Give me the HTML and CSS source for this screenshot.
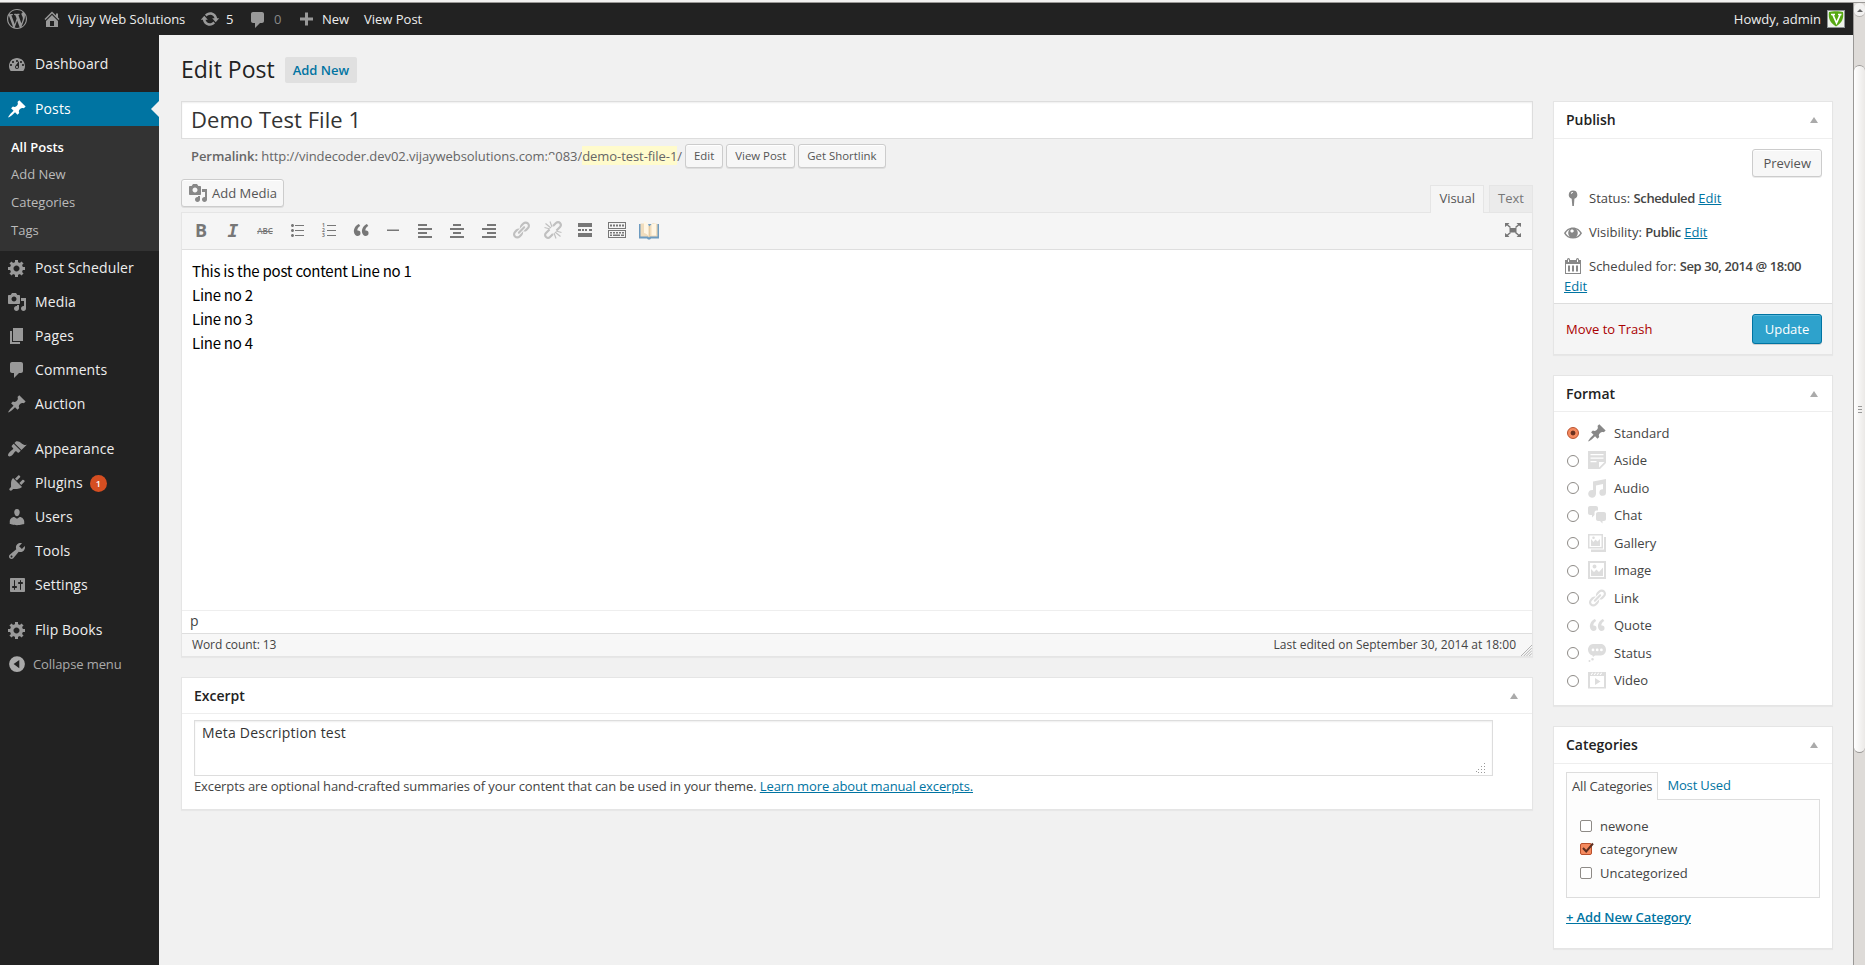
FILE: index.html
```html
<!DOCTYPE html>
<html lang="en">
<head>
    <meta charset="UTF-8">
    <meta name="viewport" content="width=device-width, initial-scale=1.0">
    <title>Edit Post</title>
    <link rel="stylesheet" href="styles.css">
</head>
<body>
    <!-- Icon set -->
    <svg class="sprite">
        <symbol id="wp" viewBox="0 0 20 20"><path d="M20 10c0-5.51-4.49-10-10-10C4.48 0 0 4.49 0 10c0 5.52 4.48 10 10 10 5.51 0 10-4.48 10-10zM7.78 15.37L4.37 6.22c.55-.02 1.17-.08 1.17-.08.5-.06.44-1.13-.06-1.11 0 0-1.45.11-2.37.11-.18 0-.37 0-.58-.01C4.12 2.69 6.87 1.11 10 1.11c2.33 0 4.45.87 6.05 2.34-.68-.11-1.65.39-1.65 1.58 0 .74.45 1.36.9 2.1.35.61.55 1.36.55 2.46 0 1.49-1.4 5-1.4 5l-3.03-8.37c.54-.02.82-.17.82-.17.5-.05.44-1.25-.06-1.22 0 0-1.44.12-2.38.12-.87 0-2.33-.12-2.33-.12-.5-.03-.56 1.2-.06 1.22l.92.08 1.26 3.41zM17.41 10c.24-.64.74-1.87.43-4.25.7 1.29 1.05 2.71 1.05 4.25 0 3.29-1.73 6.24-4.4 7.78.97-2.59 1.94-5.2 2.92-7.78zM6.1 18.09C3.12 16.65 1.11 13.53 1.11 10c0-1.3.23-2.48.72-3.59C3.25 10.3 4.67 14.2 6.1 18.09zm4.03-6.63l2.58 6.98c-.86.29-1.76.45-2.71.45-.79 0-1.57-.11-2.29-.33.81-2.38 1.62-4.74 2.42-7.1z"/></symbol>
        <symbol id="home" viewBox="0 0 20 20"><path d="M16 8.5l1.53 1.53-1.06 1.06L10 4.6l-6.47 6.49-1.06-1.06L10 2.5l4 4v-2h2v4zm-6-2.46l6 5.99V18H4v-5.97zM12 17v-5H8v5h4z"/></symbol>
        <symbol id="update" viewBox="0 0 20 20"><path d="M10.2 3.28c3.53 0 6.43 2.61 6.92 6h2.08l-3.5 4-3.5-4h2.32c-.45-1.97-2.21-3.45-4.32-3.45-1.45 0-2.73.71-3.54 1.78L4.95 5.66C6.23 4.2 8.11 3.28 10.2 3.28zm-.4 13.44c-3.52 0-6.43-2.61-6.92-6H.8l3.5-4c1.17 1.33 2.33 2.67 3.5 4H5.48c.45 1.97 2.21 3.45 4.32 3.45 1.45 0 2.73-.71 3.54-1.78l1.71 1.95c-1.28 1.46-3.15 2.38-5.25 2.38z"/></symbol>
        <symbol id="plus" viewBox="0 0 20 20"><path d="M17 8.5v3h-5v5H9v-5H4v-3h5v-5h3v5h5z"/></symbol>
        <symbol id="comments" viewBox="0 0 20 20"><path d="M5 2h9c1.1 0 2 .9 2 2v7c0 1.1-.9 2-2 2h-2l-5 5v-5H5c-1.1 0-2-.9-2-2V4c0-1.1.9-2 2-2z"/></symbol>
        <symbol id="dashboard" viewBox="0 0 20 20"><path fill-rule="evenodd" d="M3.76 17h12.48c1.1-1.37 1.76-3.11 1.76-5 0-4.42-3.58-8-8-8s-8 3.58-8 8c0 1.89.66 3.63 1.76 5zM10 6c.55 0 1 .45 1 1s-.45 1-1 1-1-.45-1-1 .45-1 1-1zM6 7c.55 0 1 .45 1 1s-.45 1-1 1-1-.45-1-1 .45-1 1-1zm8 0c.55 0 1 .45 1 1s-.45 1-1 1-1-.45-1-1 .45-1 1-1zm-5.37 4.55L12 7v6c0 1.1-.9 2-2 2s-2-.9-2-2c0-.57.24-1.08.63-1.45zM4 10c.55 0 1 .45 1 1s-.45 1-1 1-1-.45-1-1 .45-1 1-1zm12 0c.55 0 1 .45 1 1s-.45 1-1 1-1-.45-1-1 .45-1 1-1zm-5 3c0-.55-.45-1-1-1s-1 .45-1 1 .45 1 1 1 1-.45 1-1z"/></symbol>
        <symbol id="pin" viewBox="0 0 20 20"><path d="M10.44 3.02l1.82-1.82 6.36 6.35-1.83 1.82c-1.05-.68-2.48-.57-3.41.36l-.75.75c-.92.93-1.04 2.35-.35 3.41l-1.83 1.82-2.41-2.41-2.8 2.79c-.42.42-3.38 2.71-3.8 2.29s1.86-3.39 2.28-3.81l2.79-2.79L4.1 9.36l1.83-1.82c1.05.69 2.48.57 3.4-.36l.75-.75c.93-.92 1.05-2.35.36-3.41z"/></symbol>
        <symbol id="gear" viewBox="0 0 20 20"><path d="M18 12h-2.18c-.17.7-.44 1.35-.81 1.93l1.54 1.54-2.1 2.1-1.54-1.54c-.58.36-1.23.63-1.91.79V19H8v-2.18c-.68-.16-1.33-.43-1.91-.79l-1.54 1.54-2.12-2.12 1.54-1.54c-.36-.58-.63-1.23-.79-1.91H1V9.03h2.17c.16-.7.44-1.35.8-1.94L2.43 5.55l2.1-2.1 1.54 1.54c.58-.37 1.24-.64 1.93-.81V2h3v2.18c.68.16 1.33.43 1.91.79l1.54-1.54 2.12 2.12-1.54 1.54c.36.59.64 1.24.8 1.94H18V12zm-8.5 1.5c1.66 0 3-1.34 3-3s-1.34-3-3-3-3 1.34-3 3 1.34 3 3 3z"/></symbol>
        <symbol id="media" viewBox="0 0 20 20"><path d="M13 11V4c0-.55-.45-1-1-1h-1.67L9 1H5L3.67 3H2c-.55 0-1 .45-1 1v7c0 .55.45 1 1 1h10c.55 0 1-.45 1-1zM7 4.5c1.38 0 2.5 1.12 2.5 2.5S8.38 9.5 7 9.5 4.5 8.38 4.5 7 5.62 4.5 7 4.5zM14 6h5v10.5c0 1.38-1.12 2.5-2.5 2.5S14 17.88 14 16.5s1.12-2.5 2.5-2.5c.17 0 .34.02.5.05V9h-3V6zm-4 8.05V13h2v3.5c0 1.38-1.12 2.5-2.5 2.5S7 17.88 7 16.5 8.12 14 9.5 14c.17 0 .34.02.5.05z"/></symbol>
        <symbol id="pages" viewBox="0 0 20 20"><path d="M6 15V2h10v13H6zm-1 1h8v2H3V5h2v11z"/></symbol>
        <symbol id="appearance" viewBox="0 0 20 20"><path d="M14.48 11.06L7.41 3.99l1.5-1.5c.5-.56 2.3-.47 3.51.32 1.21.8 1.43 1.28 2.91 2.1 1.18.64 2.45 1.26 4.45.85zm-.71.71L6.7 4.7 4.93 6.47c-.39.39-.39 1.02 0 1.41l1.06 1.06c.39.39.39 1.03 0 1.42-.6.6-1.43 1.11-2.21 1.69-.35.26-.7.53-1.01.84C1.43 14.23.4 16.08 1.4 17.07c.99 1 2.84-.03 4.18-1.36.31-.31.58-.66.85-1.02.57-.78 1.08-1.61 1.69-2.21.39-.39 1.02-.39 1.41 0l1.06 1.06c.39.39 1.02.39 1.41 0z"/></symbol>
        <symbol id="plugins" viewBox="0 0 20 20"><path d="M13.11 4.36L9.87 7.6 8 5.73l3.24-3.24c.35-.34 1.05-.2 1.56.32.52.51.66 1.21.31 1.55zm-8 1.77l.91-1.12 9.01 9.01-1.19.84c-.71.71-2.63 1.16-3.82 1.16H6.14L4.9 17.26c-.59.59-1.54.59-2.12 0-.59-.58-.59-1.53 0-2.12l1.24-1.24v-3.88c0-1.13.4-3.19 1.09-3.89zm7.26 3.97l3.24-3.24c.34-.35 1.04-.21 1.55.31.52.51.66 1.21.31 1.55l-3.24 3.25z"/></symbol>
        <symbol id="users" viewBox="0 0 20 20"><path d="M10 9.25c-2.27 0-2.73-3.44-2.73-3.44C7 4.02 7.82 2 9.97 2c2.16 0 2.98 2.02 2.71 3.81 0 0-.41 3.44-2.68 3.44zm0 2.57L12.72 10c2.39 0 4.52 2.33 4.52 4.53v2.49s-3.65 1.13-7.24 1.13c-3.65 0-7.24-1.13-7.24-1.13v-2.49c0-2.25 1.94-4.48 4.47-4.48z"/></symbol>
        <symbol id="tools" viewBox="0 0 20 20"><path d="M16.68 9.77c-1.34 1.34-3.3 1.67-4.95.99l-5.41 6.52c-.99.99-2.59.99-3.58 0s-.99-2.59 0-3.57l6.52-5.42c-.68-1.65-.35-3.61.99-4.95 1.28-1.28 3.12-1.62 4.72-1.06l-2.89 2.89 2.82 2.82 2.86-2.87c.53 1.58.18 3.39-1.08 4.65zM3.81 16.21c.4.39 1.04.39 1.43 0 .4-.4.4-1.04 0-1.43-.39-.4-1.03-.4-1.43 0-.39.39-.39 1.03 0 1.43z"/></symbol>
        <symbol id="settings" viewBox="0 0 20 20"><path d="M18 16V4c0-.55-.45-1-1-1H4c-.55 0-1 .45-1 1v12c0 .55.45 1 1 1h13c.55 0 1-.45 1-1zM8 11h1c.55 0 1 .45 1 1s-.45 1-1 1H8v1.5c0 .28-.22.5-.5.5s-.5-.22-.5-.5V13H6c-.55 0-1-.45-1-1s.45-1 1-1h1V5.5c0-.28.22-.5.5-.5s.5.22.5.5V11zm5-2h-1c-.55 0-1-.45-1-1s.45-1 1-1h1V5.5c0-.28.22-.5.5-.5s.5.22.5.5V7h1c.55 0 1 .45 1 1s-.45 1-1 1h-1v5.5c0 .28-.22.5-.5.5s-.5-.22-.5-.5V9z"/></symbol>
        <symbol id="collapse" viewBox="0 0 20 20"><path fill-rule="evenodd" d="M10 2.2a7.9 7.9 0 1 0 0 15.8 7.9 7.9 0 0 0 0-15.8zM12.3 6v8.2L6.6 10.1z"/></symbol>
        <symbol id="ul" viewBox="0 0 20 20"><path d="M5.5 7C4.67 7 4 6.33 4 5.5 4 4.68 4.67 4 5.5 4 6.32 4 7 4.68 7 5.5 7 6.33 6.32 7 5.5 7zM8 5h9v1H8V5zm-2.5 7c-.83 0-1.5-.67-1.5-1.5C4 9.68 4.67 9 5.5 9c.82 0 1.5.68 1.5 1.5 0 .83-.68 1.5-1.5 1.5zM8 10h9v1H8v-1zm-2.5 7c-.83 0-1.5-.67-1.5-1.5 0-.82.67-1.5 1.5-1.5.82 0 1.5.68 1.5 1.5 0 .83-.68 1.5-1.5 1.5zM8 15h9v1H8v-1z"/></symbol>
        <symbol id="lines" viewBox="0 0 20 20"><path d="M8 5h9v1H8zM8 10h9v1H8zM8 15h9v1H8z"/></symbol>
        <symbol id="quote" viewBox="0 0 20 20"><path d="M9.49 13.22c0-.74-.2-1.38-.61-1.9-.62-.78-1.83-.88-2.53-.72-.29-1.65 1.11-3.75 2.92-4.65L7.88 4c-2.73 1.3-5.42 4.28-4.96 8.05C3.21 14.43 4.59 16 6.54 16c.85 0 1.56-.25 2.12-.75s.83-1.18.83-2.03zm8.05 0c0-.74-.2-1.38-.61-1.9-.63-.78-1.83-.88-2.53-.72-.29-1.65 1.11-3.75 2.92-4.65L15.93 4c-2.73 1.3-5.41 4.28-4.95 8.05.29 2.38 1.66 3.95 3.61 3.95.85 0 1.56-.25 2.12-.75s.83-1.18.83-2.03z"/></symbol>
        <symbol id="hr" viewBox="0 0 20 20"><path d="M4 9.5h12v1.5H4z"/></symbol>
        <symbol id="left" viewBox="0 0 20 20"><path d="M3 4h9v2H3zM3 8h14v2H3zM3 12h9v2H3zM3 16h14v2H3z"/></symbol>
        <symbol id="center" viewBox="0 0 20 20"><path d="M6 4h8v2H6zM3 8h14v2H3zM6 12h8v2H6zM3 16h14v2H3z"/></symbol>
        <symbol id="right" viewBox="0 0 20 20"><path d="M8 4h9v2H8zM3 8h14v2H3zM8 12h9v2H8zM3 16h14v2H3z"/></symbol>
        <symbol id="link" viewBox="0 0 20 20"><path d="M17.74 2.76c1.68 1.69 1.68 4.41 0 6.1l-1.53 1.52c-1.12 1.12-2.7 1.47-4.14 1.09l2.62-2.61.76-.77.76-.76c.84-.84.84-2.2 0-3.04-.84-.85-2.2-.85-3.04 0l-.77.76-3.38 3.38c-.37-1.44-.02-3.02 1.1-4.14l1.52-1.53c1.69-1.68 4.42-1.68 6.1 0zM8.59 13.43l5.34-5.34c.42-.42.42-1.1 0-1.52-.44-.43-1.13-.39-1.53 0l-5.33 5.34c-.42.42-.42 1.1 0 1.52.44.43 1.13.39 1.52 0zm-.76 2.29l4.14-4.15c.38 1.44.03 3.02-1.09 4.14l-1.52 1.53c-1.69 1.68-4.41 1.68-6.1 0-1.68-1.68-1.68-4.42 0-6.1l1.53-1.52c1.12-1.12 2.7-1.47 4.14-1.1l-4.14 4.15c-.85.84-.85 2.2 0 3.05.84.84 2.2.84 3.04 0z"/></symbol>
        <symbol id="unlink" viewBox="0 0 20 20"><g fill="none" stroke="currentColor" stroke-width="2.2"><path d="M10 6l3-3c1.2-1.2 3-1.2 4 0s1.200 2.800 0 4l-3.500 3.500M6.500 9.500l-3.500 3.500c-1.200 1.200-1.200 3 0 4s2.800 1.200 4 0l3-3"/><path stroke-width="1.200" d="M8 8L2.500 3.500M7 9L1.500 7.500M9 7L7 1.500M12 12l5.500 4.500M13 11l5.500 1.500M11 13l2 5.500"/></g></symbol>
        <symbol id="more" viewBox="0 0 20 20"><path d="M3 3h14v4H3zM3 9h3v2H3zM7 9h2v2H7zM10 9h2v2h-2zM14 9h3v2h-3zM3 13h14v4H3z"/></symbol>
        <symbol id="sink" viewBox="0 0 20 20"><path fill-rule="evenodd" d="M1 2h18v7H1zM2 3v5h16V3zM1 10h18v8H1zM2 11v6h16v-6zM3 4.500h2v2H3zM6 4.500h2v2H6zM9 4.500h2v2H9zM12 4.500h2v2h-2zM15 4.500h2v2h-2zM3 12h2v1.500H3zM6 12h2v1.500H6zM9 12h2v1.500H9zM12 12h2v1.500h-2zM15 12h2v1.500h-2zM3 14.500h2V16H3zM6 14.500h7V16H6zM14 14.500h3V16h-3z"/></symbol>
        <symbol id="full" viewBox="0 0 20 20"><path d="M6.500 8h7v4.500h-7zM2 3h4.500L5 4.500l3 2.500-1 1-3-2.500L2 7zM18 3h-4.500L15 4.500 12 7l1 1 3-2.500L18 7zM2 17h4.500L5 15.500 8 13l-1-1-3 2.500L2 13zM18 17h-4.500l1.500-1.500-3-2.500 1-1 3 2.500 2-1.500z"/></symbol>
        <symbol id="book" viewBox="0 0 20 20"><path fill="#6d9bc0" d="M0 4h20v14.500h-8l-1 1H9l-1-1H0z"/><path fill="#f0dcbc" d="M1.500 3.500L6 3.500l4 3 4-3.500 4.500 1v12.500H11l-1 1-1-1H1.500z"/><path fill="#fff6e4" d="M5 1C8 2 9.500 4 10 6.500V17C9 14.500 7 13.500 5 13zM12.500 4l4.500-.5v12h-4.500z"/><path fill="#d9b98a" d="M9.700 6h.8v11h-.8z"/></symbol>
        <symbol id="marker" viewBox="0 0 20 20"><path fill-rule="evenodd" d="M10 1.500a4.200 4.200 0 0 0-1.300 8.200L9.300 17h1.600l.5-7.300A4.200 4.200 0 0 0 10 1.500zM8.400 3.500c.8-.6 1.800-.5 1.800.1s-1.200.6-1.600 1.200-1.200-.600-.2-1.300z"/></symbol>
        <symbol id="eye" viewBox="0 0 20 20"><path fill-rule="evenodd" d="M10 4.500C6 4.500 2.800 6.900 1 10.200c1.800 3.300 5 5.300 9 5.300s7.200-2 9-5.300C17.200 6.900 14 4.500 10 4.500zM2.800 10.200C4 8.300 5.300 7 6.800 6.300a5 5 0 0 0 0 7.400C5.200 13 4 11.900 2.800 10.200zm14.400 0c-1.200 1.700-2.400 2.800-4 3.500a5 5 0 0 0 0-7.400c1.500.7 2.800 2 4 3.900zM9 6.500c1 0 1.800.6 1.800 1.500S10 9.500 9 9.500 7.400 9 7.400 8 8 6.500 9 6.500z"/></symbol>
        <symbol id="calendar" viewBox="0 0 20 20"><path fill-rule="evenodd" d="M2 3h2v-.5a1.500 1.500 0 0 1 3 0V3h6v-.5a1.500 1.500 0 0 1 3 0V3h2v14H2zM3 7v9h14V7zM5 8.500h2v6H5zM9 8.500h2v6H9zM13 8.500h2v6h-2zM5 2.500V5h1V2.500zM14 2.500V5h1V2.500z"/></symbol>
        <symbol id="aside" viewBox="0 0 20 20"><path fill-rule="evenodd" d="M1 1h18v12l-6 6H1zM3.500 4v1.200h13V4zM3.500 7.500v1.200h13V7.500zM3.500 11v1.200h6V11zM12 12v5.500l5.500-5.500z"/></symbol>
        <symbol id="audio" viewBox="0 0 20 20"><path d="M6 3.500L19 1v13.500a3.300 3.300 0 1 1-3-3.300V6L9 7.500v8.300A3.900 3.900 0 1 1 6 12z"/></symbol>
        <symbol id="chat" viewBox="0 0 20 20"><path d="M3 1h6c1.100 0 2 .9 2 2v2.500H9.500C8 5.500 7.500 6.500 7.500 8v2L5 12.500V10H3c-1.100 0-2-.9-2-2V3c0-1.100.9-2 2-2zM11 7h6c1.100 0 2 .9 2 2v5c0 1.100-.9 2-2 2h-1.500v2.500L13 16h-2c-1.100 0-2-.9-2-2V9c0-1.100.9-2 2-2z"/></symbol>
        <symbol id="gallery" viewBox="0 0 20 20"><path fill-rule="evenodd" d="M1 1h15v14.500H1zM2.500 2.500V14h12V2.500zM4 13V6l2.500 3 2-2.500 2 2L13 6v7zM6.500 3.500a1.300 1.300 0 1 1 0 2.600 1.300 1.300 0 0 1 0-2.600zM17 4h2v15H4v-2.500h13z"/></symbol>
        <symbol id="image" viewBox="0 0 20 20"><path fill-rule="evenodd" d="M1 1h18v18H1zM3 3v14h14V3zM4 16V9l3 3 2.500-2.500L12 12l4-4.500V16zM7.500 4.500a2 2 0 1 1 0 4 2 2 0 0 1 0-4z"/></symbol>
        <symbol id="status" viewBox="0 0 20 20"><path fill-rule="evenodd" d="M6 1h8c2.800 0 5 2.600 5 5.800S16.800 12.500 14 12.500H8L6 14l-.5-1.500C3 12 1 9.800 1 6.800S3.200 1 6 1zM6 5.500a1.400 1.400 0 1 0 0 2.800 1.400 1.400 0 0 0 0-2.800zm4.200 0a1.400 1.400 0 1 0 0 2.800 1.400 1.400 0 0 0 0-2.800zm4.200 0a1.400 1.400 0 1 0 0 2.800 1.400 1.400 0 0 0 0-2.800zM5.500 15a1.300 1.300 0 1 1 0 2.600 1.300 1.300 0 0 1 0-2.600zM2.500 17a1 1 0 1 1 0 2 1 1 0 0 1 0-2z"/></symbol>
        <symbol id="video" viewBox="0 0 20 20"><path fill-rule="evenodd" d="M1 2h18v16.500H1zM3 6v11h14V6zM5 2.700L3.600 5h1.200l1.400-2.300zM8 2.700L6.600 5h1.200l1.400-2.300zM11 2.700L9.600 5h1.200l1.400-2.300zM14 2.700L12.600 5h1.200l1.400-2.300zM8 8v7l5.500-3.500z"/></symbol>
    </svg>

    <div class="window-edge"></div>
    <div class="window">
        <div class="page">
            <header class="adminbar">
                <svg class="icon"><use href="#wp"/></svg>
                <a class="bar-item bar-home"><svg class="icon"><use href="#home"/></svg>Vijay Web Solutions</a>
                <a class="bar-item bar-updates"><svg class="icon"><use href="#update"/></svg>5</a>
                <a class="bar-item bar-comments"><svg class="icon"><use href="#comments"/></svg><span class="muted">0</span></a>
                <a class="bar-item bar-new"><svg class="icon"><use href="#plus"/></svg>New</a>
                <a class="bar-item bar-view">View Post</a>
                <a class="bar-item howdy">Howdy, admin
                    <svg class="avatar" viewBox="0 0 16 16"><rect width="16" height="16" fill="#eef3ea"/><path fill="#56a812" d="M1 1c4-1 10-1 14 0 1 6-1 11-7 14.500C2 12 0 7 1 1z"/><path fill="none" stroke="#fff" stroke-width="1.700" d="M5 4l3.500 8L12 4M3 3.500h4M10 3.500h3.500"/></svg>
                </a>
            </header>

            <div class="body">
                <nav class="menu">
                    <a class="menu-item"><svg class="icon"><use href="#dashboard"/></svg>Dashboard</a>
                    <a class="menu-item current gap"><svg class="icon"><use href="#pin"/></svg>Posts</a>
                    <div class="submenu">
                        <a class="active">All Posts</a>
                        <a>Add New</a>
                        <a>Categories</a>
                        <a>Tags</a>
                    </div>
                    <a class="menu-item"><svg class="icon"><use href="#gear"/></svg>Post Scheduler</a>
                    <a class="menu-item"><svg class="icon"><use href="#media"/></svg>Media</a>
                    <a class="menu-item"><svg class="icon"><use href="#pages"/></svg>Pages</a>
                    <a class="menu-item"><svg class="icon"><use href="#comments"/></svg>Comments</a>
                    <a class="menu-item"><svg class="icon"><use href="#pin"/></svg>Auction</a>
                    <a class="menu-item gap"><svg class="icon"><use href="#appearance"/></svg>Appearance</a>
                    <a class="menu-item"><svg class="icon"><use href="#plugins"/></svg>Plugins<span class="count">1</span></a>
                    <a class="menu-item"><svg class="icon"><use href="#users"/></svg>Users</a>
                    <a class="menu-item"><svg class="icon"><use href="#tools"/></svg>Tools</a>
                    <a class="menu-item"><svg class="icon"><use href="#settings"/></svg>Settings</a>
                    <a class="menu-item gap"><svg class="icon"><use href="#gear"/></svg>Flip Books</a>
                    <a class="menu-item collapse"><svg class="icon"><use href="#collapse"/></svg>Collapse menu</a>
                </nav>

                <main class="content">
                    <div class="heading">
                        <h1>Edit Post</h1>
                        <a class="add-new">Add New</a>
                    </div>

                    <div class="columns">
                        <div class="primary">
                            <div class="title-field">Demo Test File 1</div>
                            <div class="permalink">
                                <span><strong>Permalink:</strong> http://vindecoder.dev02.vijaywebsolutions.com<span class="smudge">:8</span>083/<mark>demo-test-file-1</mark>/</span>
                                <button class="btn small">Edit</button>
                                <button class="btn small">View Post</button>
                                <button class="btn small">Get Shortlink</button>
                            </div>

                            <div class="editor-tools">
                                <button class="btn add-media"><svg class="icon"><use href="#media"/></svg>Add Media</button>
                                <div class="tabs">
                                    <a class="tab selected">Visual</a>
                                    <a class="tab">Text</a>
                                </div>
                            </div>

                            <div class="editor">
                                <div class="toolbar">
                                    <span class="tool bold">B</span>
                                    <span class="tool italic">I</span>
                                    <span class="tool strike">ABC</span>
                                    <span class="tool"><svg class="icon"><use href="#ul"/></svg></span>
                                    <span class="tool numbered"><span class="digits">1<br>2<br>3</span><svg class="icon"><use href="#lines"/></svg></span>
                                    <span class="tool"><svg class="icon"><use href="#quote"/></svg></span>
                                    <span class="tool"><svg class="icon"><use href="#hr"/></svg></span>
                                    <span class="tool"><svg class="icon"><use href="#left"/></svg></span>
                                    <span class="tool"><svg class="icon"><use href="#center"/></svg></span>
                                    <span class="tool"><svg class="icon"><use href="#right"/></svg></span>
                                    <span class="tool disabled"><svg class="icon"><use href="#link"/></svg></span>
                                    <span class="tool disabled"><svg class="icon"><use href="#unlink"/></svg></span>
                                    <span class="tool"><svg class="icon"><use href="#more"/></svg></span>
                                    <span class="tool"><svg class="icon"><use href="#sink"/></svg></span>
                                    <span class="tool"><svg class="icon"><use href="#book"/></svg></span>
                                    <span class="tool fullscreen"><svg class="icon"><use href="#full"/></svg></span>
                                </div>
                                <div class="post-body">
                                    <p>This is the post content Line no 1<br>Line no 2<br>Line no 3<br>Line no 4</p>
                                </div>
                                <div class="path">p</div>
                                <div class="statusbar">
                                    <span class="words">Word count: 13</span>
                                    <span>Last edited on September 30, 2014 at 18:00</span>
                                    <svg class="grip" viewBox="0 0 12 12"><path d="M0 12L12 0M3 12l9-9M6 12l6-6M9 12l3-3"/></svg>
                                </div>
                            </div>

                            <section class="box excerpt">
                                <h3 class="box-head">Excerpt<i class="toggle"></i></h3>
                                <div class="inside">
                                    <div class="textarea">Meta Description test
                                        <svg class="dots" viewBox="0 0 10 10"><path d="M8.500 0v10M5.500 3v7M2.500 6v4M0 8.500h2"/></svg>
                                    </div>
                                    <p>Excerpts are optional hand-crafted summaries of your content that can be used in your theme. <a>Learn more about manual excerpts.</a></p>
                                </div>
                            </section>
                        </div>

                        <aside class="secondary">
                            <section class="box publish">
                                <h3 class="box-head tall">Publish<i class="toggle"></i></h3>
                                <div class="preview"><button class="btn">Preview</button></div>
                                <div class="misc">
                                    <div class="misc-row"><svg class="icon"><use href="#marker"/></svg><span>Status: <b>Scheduled</b> <a>Edit</a></span></div>
                                    <div class="misc-row"><svg class="icon"><use href="#eye"/></svg><span>Visibility: <b>Public</b> <a>Edit</a></span></div>
                                    <div class="misc-row"><svg class="icon"><use href="#calendar"/></svg><span>Scheduled for: <b>Sep 30, 2014 @ 18:00</b></span></div>
                                    <a class="edit-date">Edit</a>
                                </div>
                                <div class="actions">
                                    <a class="trash">Move to Trash</a>
                                    <button class="btn primary-btn">Update</button>
                                </div>
                            </section>

                            <section class="box format">
                                <h3 class="box-head">Format<i class="toggle"></i></h3>
                                <div class="formats">
                                    <label class="chosen"><i class="radio on"></i><svg class="icon"><use href="#pin"/></svg>Standard</label>
                                    <label><i class="radio"></i><svg class="icon"><use href="#aside"/></svg>Aside</label>
                                    <label><i class="radio"></i><svg class="icon"><use href="#audio"/></svg>Audio</label>
                                    <label><i class="radio"></i><svg class="icon"><use href="#chat"/></svg>Chat</label>
                                    <label><i class="radio"></i><svg class="icon"><use href="#gallery"/></svg>Gallery</label>
                                    <label><i class="radio"></i><svg class="icon"><use href="#image"/></svg>Image</label>
                                    <label><i class="radio"></i><svg class="icon"><use href="#link"/></svg>Link</label>
                                    <label><i class="radio"></i><svg class="icon"><use href="#quote"/></svg>Quote</label>
                                    <label><i class="radio"></i><svg class="icon"><use href="#status"/></svg>Status</label>
                                    <label><i class="radio"></i><svg class="icon"><use href="#video"/></svg>Video</label>
                                </div>
                            </section>

                            <section class="box categories">
                                <h3 class="box-head tall">Categories<i class="toggle"></i></h3>
                                <div class="cat-inside">
                                    <div class="cat-tabs">
                                        <span class="cat-tab">All Categories</span>
                                        <a>Most Used</a>
                                    </div>
                                    <div class="cat-panel">
                                        <label><i class="check"></i>newone</label>
                                        <label><i class="check on"><svg viewBox="0 0 14 13"><path d="M3 6l3.200 3.500L13 1.500"/></svg></i>categorynew</label>
                                        <label><i class="check"></i>Uncategorized</label>
                                    </div>
                                    <a class="add-cat">+ Add New Category</a>
                                </div>
                            </section>
                        </aside>
                    </div>
                </main>
            </div>
        </div>

        <div class="scrollbar">
            <div class="scroll-up"><i></i></div>
            <div class="thumb"><i></i><i></i><i></i></div>
        </div>
    </div>
</body>
</html>
```
FILE: styles.css
```css
* {
    box-sizing: border-box;
}

body {
    margin: 0;
    height: 965px;
    overflow: hidden;
    display: flex;
    flex-direction: column;
    background: #f1f1f1;
    color: #444;
    font-family: "Open Sans", sans-serif;
    font-size: 13px;
}

a {
    color: #0074a2;
}

h1, h3, p {
    margin: 0;
}

.sprite {
    display: none;
}

.icon {
    width: 20px;
    height: 20px;
    fill: currentColor;
    flex-shrink: 0;
}

.window-edge {
    height: 3px;
    flex-shrink: 0;
    background: #f2f1f0;
    border-bottom: 1px solid #9a9896;
}

.window {
    display: flex;
    flex: 1;
    min-height: 0;
}

.page {
    flex: 1;
    display: flex;
    flex-direction: column;
    min-width: 0;
}

/* Admin bar */
.adminbar {
    height: 32px;
    flex-shrink: 0;
    display: flex;
    align-items: center;
    padding: 0 8px 0 7px;
    background: #222;
    color: #999;
}

.bar-item {
    display: flex;
    align-items: center;
    gap: 6px;
    color: #eee;
    white-space: nowrap;
}

.bar-item .icon {
    color: #999;
}

.bar-home {
    width: 158px;
    margin-left: 15px;
    letter-spacing: -0.05px;
}

.bar-updates {
    width: 48px;
}

.bar-comments {
    width: 48px;
}

.bar-comments .icon {
    margin-top: 2px;
}

.bar-new {
    width: 68px;
}

.muted {
    color: #888;
}

.howdy {
    margin-left: auto;
}

.avatar {
    width: 18px;
    height: 18px;
    border: 1px solid #8c8f94;
}

/* Side menu */
.body {
    flex: 1;
    display: flex;
    min-height: 0;
}

.menu {
    width: 159px;
    padding-top: 12px;
    background: #222;
    flex-shrink: 0;
}

.menu-item {
    height: 34px;
    display: flex;
    align-items: center;
    gap: 8px;
    padding: 0 0 2px 7px;
    color: #eee;
    font-size: 14px;
    letter-spacing: 0.12px;
}

.menu-item .icon {
    margin-top: 2px;
    color: #999;
}

.menu-item.gap {
    margin-top: 11px;
}

.menu-item.current {
    position: relative;
    background: #0074a2;
    color: #fff;
}

.menu-item.current .icon {
    color: #fff;
}

.menu-item.current::after {
    content: "";
    position: absolute;
    right: 0;
    top: 9px;
    border: 8px solid transparent;
    border-left: 0;
    border-right-color: #f1f1f1;
}

.submenu {
    background: #333;
    padding: 7px 0;
}

.submenu a {
    display: block;
    padding-left: 11px;
    line-height: 28px;
    color: #bbb;
}

.submenu .active {
    margin-bottom: -1px;
    color: #fff;
    font-weight: 600;
}

.count {
    width: 17px;
    height: 17px;
    margin: 2px 0 0 -1px;
    border-radius: 50%;
    background: #d54e21;
    color: #fff;
    font-size: 9px;
    font-weight: 600;
    line-height: 17px;
    text-align: center;
}

.collapse {
    padding-bottom: 1px;
    color: #aaa;
    font-size: 13px;
    gap: 6px;
    letter-spacing: -0.1px;
}

.collapse .icon {
    margin-top: 0;
    color: #aaa;
}

/* Content */
.content {
    flex: 1;
    padding: 22px 20px 0 22px;
    min-width: 0;
}

.heading {
    display: flex;
    align-items: center;
    gap: 10px;
    height: 26px;
    margin-bottom: 18px;
}

h1 {
    padding-bottom: 2px;
    font-size: 23px;
    font-weight: 400;
    line-height: 24px;
    color: #222;
}

.add-new {
    padding: 0 8px;
    border-radius: 2px;
    background: #e0e0e0;
    font-weight: 600;
    line-height: 26px;
}

.columns {
    display: grid;
    grid-template-columns: 1fr 280px;
    gap: 20px;
    align-items: start;
}

.title-field {
    height: 38px;
    padding: 0 9px;
    border: 1px solid #ddd;
    background: #fff;
    box-shadow: inset 0 1px 2px rgba(0, 0, 0, 0.07);
    color: #333;
    font-size: 22px;
    line-height: 34px;
    letter-spacing: 0.05px;
}

.permalink {
    display: flex;
    align-items: center;
    gap: 3px;
    height: 24px;
    margin-top: 5px;
    padding-left: 10px;
    color: #666;
    letter-spacing: -0.06px;
    white-space: nowrap;
}

.permalink strong {
    font-weight: 600;
}

.permalink mark {
    padding: 1px 0 0;
    background: #fffbcc;
    color: inherit;
}

.smudge {
    position: relative;
}

.smudge::after {
    content: "";
    position: absolute;
    right: 0;
    top: 8px;
    width: 6px;
    height: 9px;
    background: #f1f1f1;
}

.btn {
    height: 28px;
    padding: 0 10px;
    border: 1px solid #ccc;
    border-radius: 3px;
    background: #f7f7f7;
    box-shadow: inset 0 1px 0 #fff, 0 1px 0 rgba(0, 0, 0, 0.08);
    color: #555;
    font-family: inherit;
    font-size: 13px;
}

.btn.small {
    height: 24px;
    padding: 0 8px 1px;
    font-size: 11.4px;
}

.editor-tools {
    display: flex;
    justify-content: space-between;
    height: 33px;
    margin-top: 11px;
}

.add-media {
    display: flex;
    align-items: center;
    gap: 4px;
    padding: 0 6px;
}

.add-media .icon {
    color: #888;
}

.tabs {
    display: flex;
    align-items: flex-end;
    gap: 5px;
}

.tab {
    height: 27px;
    padding: 0 8px;
    border: 1px solid #e5e5e5;
    border-bottom: 0;
    background: #ebebeb;
    color: #777;
    line-height: 25px;
}

.tab.selected {
    position: relative;
    height: 28px;
    margin-bottom: -1px;
    background: #f5f5f5;
    color: #555;
}

/* Editor */
.editor {
    border: 1px solid #e5e5e5;
    background: #fff;
    box-shadow: 0 1px 1px rgba(0, 0, 0, 0.04);
}

.toolbar {
    display: flex;
    align-items: center;
    height: 37px;
    padding: 0 9px 2px 3px;
    background: #f5f5f5;
    border-bottom: 1px solid #dedede;
    color: #777;
}

.tool {
    width: 32px;
    height: 20px;
    display: flex;
    align-items: center;
    justify-content: center;
}

.tool.bold {
    font-size: 18px;
    font-weight: 700;
}

.tool.italic {
    font: italic bold 18px "DejaVu Sans Mono", monospace;
}

.tool.strike {
    font-size: 8px;
    font-weight: 600;
    text-decoration: line-through;
}

.tool.numbered {
    position: relative;
}

.digits {
    position: absolute;
    left: 9px;
    top: 3px;
    font-size: 5px;
    font-weight: 700;
    line-height: 5px;
}

.tool.disabled {
    color: #c0c0c0;
}

.tool.fullscreen {
    width: 20px;
    margin-left: auto;
}

.post-body {
    height: 360px;
    padding: 9px 10px;
    color: #000;
    font-size: 15px;
    line-height: 24px;
    letter-spacing: -0.25px;
    font-family: "Noto Sans CJK SC", sans-serif;
}

.path {
    height: 23px;
    padding-left: 8px;
    border-top: 1px solid #eee;
    font-size: 14px;
    line-height: 20px;
}

.statusbar {
    position: relative;
    display: flex;
    justify-content: space-between;
    height: 23px;
    padding: 0 16px 0 10px;
    border-top: 1px solid #dedede;
    background: #f7f7f7;
    font-size: 12px;
    line-height: 21px;
}

.words {
    letter-spacing: -0.1px;
}

.grip {
    position: absolute;
    right: 0;
    bottom: 0;
    width: 11px;
    height: 11px;
    stroke: #999;
    stroke-width: 0.8;
}

/* Meta boxes */
.box {
    margin-bottom: 20px;
    border: 1px solid #e5e5e5;
    background: #fff;
    box-shadow: 0 1px 1px rgba(0, 0, 0, 0.04);
}

.box-head {
    display: flex;
    align-items: center;
    justify-content: space-between;
    height: 36px;
    padding: 0 14px 0 12px;
    border-bottom: 1px solid #eee;
    color: #222;
    font-size: 14px;
    font-weight: 600;
}

.box-head.tall {
    height: 37px;
    padding-bottom: 1px;
}

.toggle {
    border: 4px solid transparent;
    border-top: 0;
    border-bottom: 6px solid #aaa;
}

.excerpt {
    height: 133px;
    margin-top: 20px;
}

.inside {
    padding: 6px 12px 0;
}

.textarea {
    position: relative;
    width: 1299px;
    height: 56px;
    padding: 2px 7px;
    border: 1px solid #ddd;
    box-shadow: inset 0 1px 2px rgba(0, 0, 0, 0.07);
    color: #333;
    font-size: 14px;
    letter-spacing: 0.2px;
}

.dots {
    position: absolute;
    right: 6px;
    bottom: 2px;
    width: 10px;
    height: 10px;
    stroke: #999;
    stroke-dasharray: 1 2;
}

.inside p {
    line-height: 20px;
    letter-spacing: -0.115px;
}

.inside p a, .misc a, .add-cat {
    text-decoration: underline;
}

/* Publish */
.publish {
    height: 254px;
}

.preview {
    display: flex;
    justify-content: flex-end;
    padding: 10px 10px 0;
}

.misc {
    height: 127px;
    padding: 4px 10px 0;
    border-bottom: 1px solid #ddd;
}

.misc-row {
    display: flex;
    align-items: center;
    height: 34px;
    margin-left: -1px;
    gap: 6px;
    white-space: nowrap;
}

.misc-row .icon {
    margin-top: 1px;
    color: #888;
}

.misc b {
    font-weight: 600;
    letter-spacing: -0.4px;
}

.edit-date {
    display: block;
    margin-top: -6px;
}

.actions {
    display: flex;
    align-items: center;
    justify-content: space-between;
    height: 50px;
    padding: 0 10px 1px 12px;
    background: #f5f5f5;
}

.trash {
    color: #a00;
}

.primary-btn {
    width: 70px;
    height: 30px;
    background: #2ea2cc;
    border-color: #0074a2;
    box-shadow: inset 0 1px 0 rgba(120, 200, 230, 0.5), 0 1px 0 rgba(0, 0, 0, 0.15);
    color: #fff;
}

/* Format */
.format {
    height: 331px;
}

.formats {
    padding: 7px 13px;
}

.formats label {
    display: flex;
    align-items: center;
    height: 27.5px;
}

.formats .icon {
    margin: 0 7px 0 8px;
    color: #ddd;
}

.formats .chosen .icon {
    color: #888;
}

.radio {
    width: 12px;
    height: 12px;
    margin-top: 1px;
    border: 1px solid #8e8b87;
    border-radius: 50%;
    background: #fff;
}

.radio.on {
    border-color: #b9502c;
    background: radial-gradient(circle, #6b3220 0 2px, #f58a5f 2.8px);
}

/* Categories */
.categories {
    height: 223px;
}

.cat-inside {
    padding: 8px 12px 0;
}

.cat-tabs {
    display: flex;
    height: 28px;
    margin-bottom: -1px;
    gap: 9px;
    line-height: 26px;
    letter-spacing: -0.15px;
}

.cat-tab {
    position: relative;
    padding: 0 5px;
    border: 1px solid #ddd;
    border-bottom: 0;
    background: #fdfdfd;
    white-space: nowrap;
}

.cat-panel {
    height: 99px;
    padding: 14px 13px;
    border: 1px solid #ddd;
    background: #fdfdfd;
}

.cat-panel label {
    display: flex;
    align-items: center;
    gap: 8px;
    height: 23.5px;
}

.check {
    width: 12px;
    height: 12px;
    border: 1px solid #8e8b87;
    border-radius: 2px;
    background: #fff;
}

.check.on {
    border-color: #b9502c;
    background: #f58a5f;
}

.check svg {
    display: block;
    width: 14px;
    height: 13px;
    margin: -2px 0 0 -1px;
    fill: none;
    stroke: #5e2f20;
    stroke-width: 2;
}

.add-cat {
    display: block;
    margin-top: 10px;
    font-weight: 600;
    letter-spacing: -0.1px;
}

/* Browser scrollbar */
.scrollbar {
    width: 12px;
    display: flex;
    flex-direction: column;
    border-left: 1px solid #9a9896;
    background: #dedbd8;
}

.scroll-up {
    display: flex;
    justify-content: center;
    height: 14px;
    margin-bottom: 48px;
    border-bottom: 1px solid #b5b3b0;
    border-radius: 6px;
    background: #f2f1f0;
}

.scroll-up i {
    margin-top: 6px;
    height: 3px;
    border: 3px solid transparent;
    border-top: 0;
    border-bottom-color: #666;
}

.thumb {
    height: 688px;
    display: flex;
    flex-direction: column;
    align-items: center;
    justify-content: center;
    gap: 2px;
    border: 1px solid #9a9896;
    border-left: 0;
    border-right: 0;
    border-radius: 6px;
    background: linear-gradient(to right, #fff, #ebe9e7);
}

.thumb i {
    width: 4px;
    height: 1px;
    background: #999;
}
```
